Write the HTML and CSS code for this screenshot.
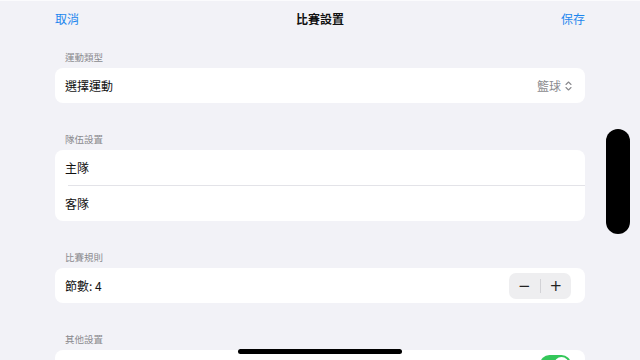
FILE: index.html
```html
<!DOCTYPE html>
<html lang="zh-Hant">
<head>
<meta charset="utf-8">
<title>比賽設置</title>
<link rel="stylesheet" href="styles.css">
</head>
<body>
<div class="screen">
  <header class="nav">
    <span class="nav-btn">取消</span>
    <span class="nav-title">比賽設置</span>
    <span class="nav-btn">保存</span>
  </header>

  <section class="group">
    <div class="group-head">運動類型</div>
    <div class="card">
      <div class="row">
        <span class="label">選擇運動</span>
        <span class="picker">籃球
          <svg class="updown" width="7" height="10" viewBox="0 0 7 10"><path d="M1 3.5 L3.5 1 L6 3.5 M1 6.5 L3.5 9 L6 6.5" fill="none" stroke="#8a8a8e" stroke-width="1.1" stroke-linecap="round" stroke-linejoin="round"/></svg>
        </span>
      </div>
    </div>
  </section>

  <section class="group">
    <div class="group-head">隊伍設置</div>
    <div class="card">
      <div class="row">
        <span class="label">主隊</span>
      </div>
      <div class="divider"></div>
      <div class="row">
        <span class="label">客隊</span>
      </div>
    </div>
  </section>

  <section class="group">
    <div class="group-head">比賽規則</div>
    <div class="card">
      <div class="row">
        <span class="label">節數: 4</span>
        <div class="stepper">
          <span class="step">−</span>
          <span class="step-sep"></span>
          <span class="step">+</span>
        </div>
      </div>
    </div>
  </section>

  <section class="group">
    <div class="group-head">其他設置</div>
    <div class="card">
      <div class="row">
        <span class="spacer"></span>
        <span class="toggle"><span class="knob"></span></span>
      </div>
    </div>
  </section>

  <div class="scroll-pill"></div>
  <div class="home-indicator"></div>
</div>
</body>
</html>
```

FILE: styles.css
```css
html, body {
  margin: 0;
  padding: 0;
  background: #f2f2f7;
}

body {
  font-family: "Noto Sans CJK TC", "Noto Sans", sans-serif;
  color: #111;
  overflow: hidden;
}

.screen {
  position: relative;
  width: 640px;
  height: 360px;
  overflow: hidden;
  border-top: 1px solid #fbfbfd;
  box-sizing: border-box;
}

.nav {
  display: flex;
  justify-content: space-between;
  align-items: center;
  height: 35px;
  padding: 0 55px;
}

.nav-btn {
  font-size: 12px;
  color: #1c86ee;
}

.nav-title {
  font-size: 12px;
  font-weight: 700;
}

.group {
  margin: 0 55px;
  padding-top: 15px;
}

.group + .group {
  padding-top: 30px;
}

.group-head {
  font-size: 9.5px;
  line-height: 12px;
  color: #8a8a8e;
  padding: 0 10px 5px;
}

.card {
  background: #fff;
  border-radius: 8px;
}

.row {
  display: flex;
  align-items: center;
  justify-content: space-between;
  height: 35px;
  padding: 0 14px 0 10px;
}

.label {
  font-size: 12px;
}

.spacer {
  flex: 1;
}

.divider {
  height: 1px;
  background: #e3e3e8;
  margin-left: 13px;
}

.picker {
  display: flex;
  align-items: center;
  gap: 4px;
  font-size: 12px;
  color: #8a8a8e;
  margin-right: -1px;
}

.stepper {
  display: flex;
  align-items: center;
  width: 62px;
  height: 26px;
  background: #eeeef0;
  border-radius: 7px;
}

.step {
  flex: 1;
  text-align: center;
  font-size: 15px;
  line-height: 26px;
  color: #222;
  font-family: "DejaVu Sans", sans-serif;
}

.step-sep {
  width: 1px;
  height: 14px;
  background: #d2d2d6;
}

.toggle {
  position: relative;
  align-self: flex-start;
  margin-top: 5px;
  width: 31px;
  height: 19px;
  border-radius: 10px;
  background: #34c759;
}

.knob {
  position: absolute;
  right: 2px;
  top: 2px;
  width: 15px;
  height: 15px;
  border-radius: 50%;
  background: #fff;
}

.scroll-pill {
  position: absolute;
  left: 606px;
  top: 128px;
  width: 24px;
  height: 105px;
  border-radius: 12px;
  background: #000;
}

.home-indicator {
  position: absolute;
  left: 238px;
  top: 348px;
  width: 164px;
  height: 5px;
  border-radius: 3px;
  background: #000;
}
```
